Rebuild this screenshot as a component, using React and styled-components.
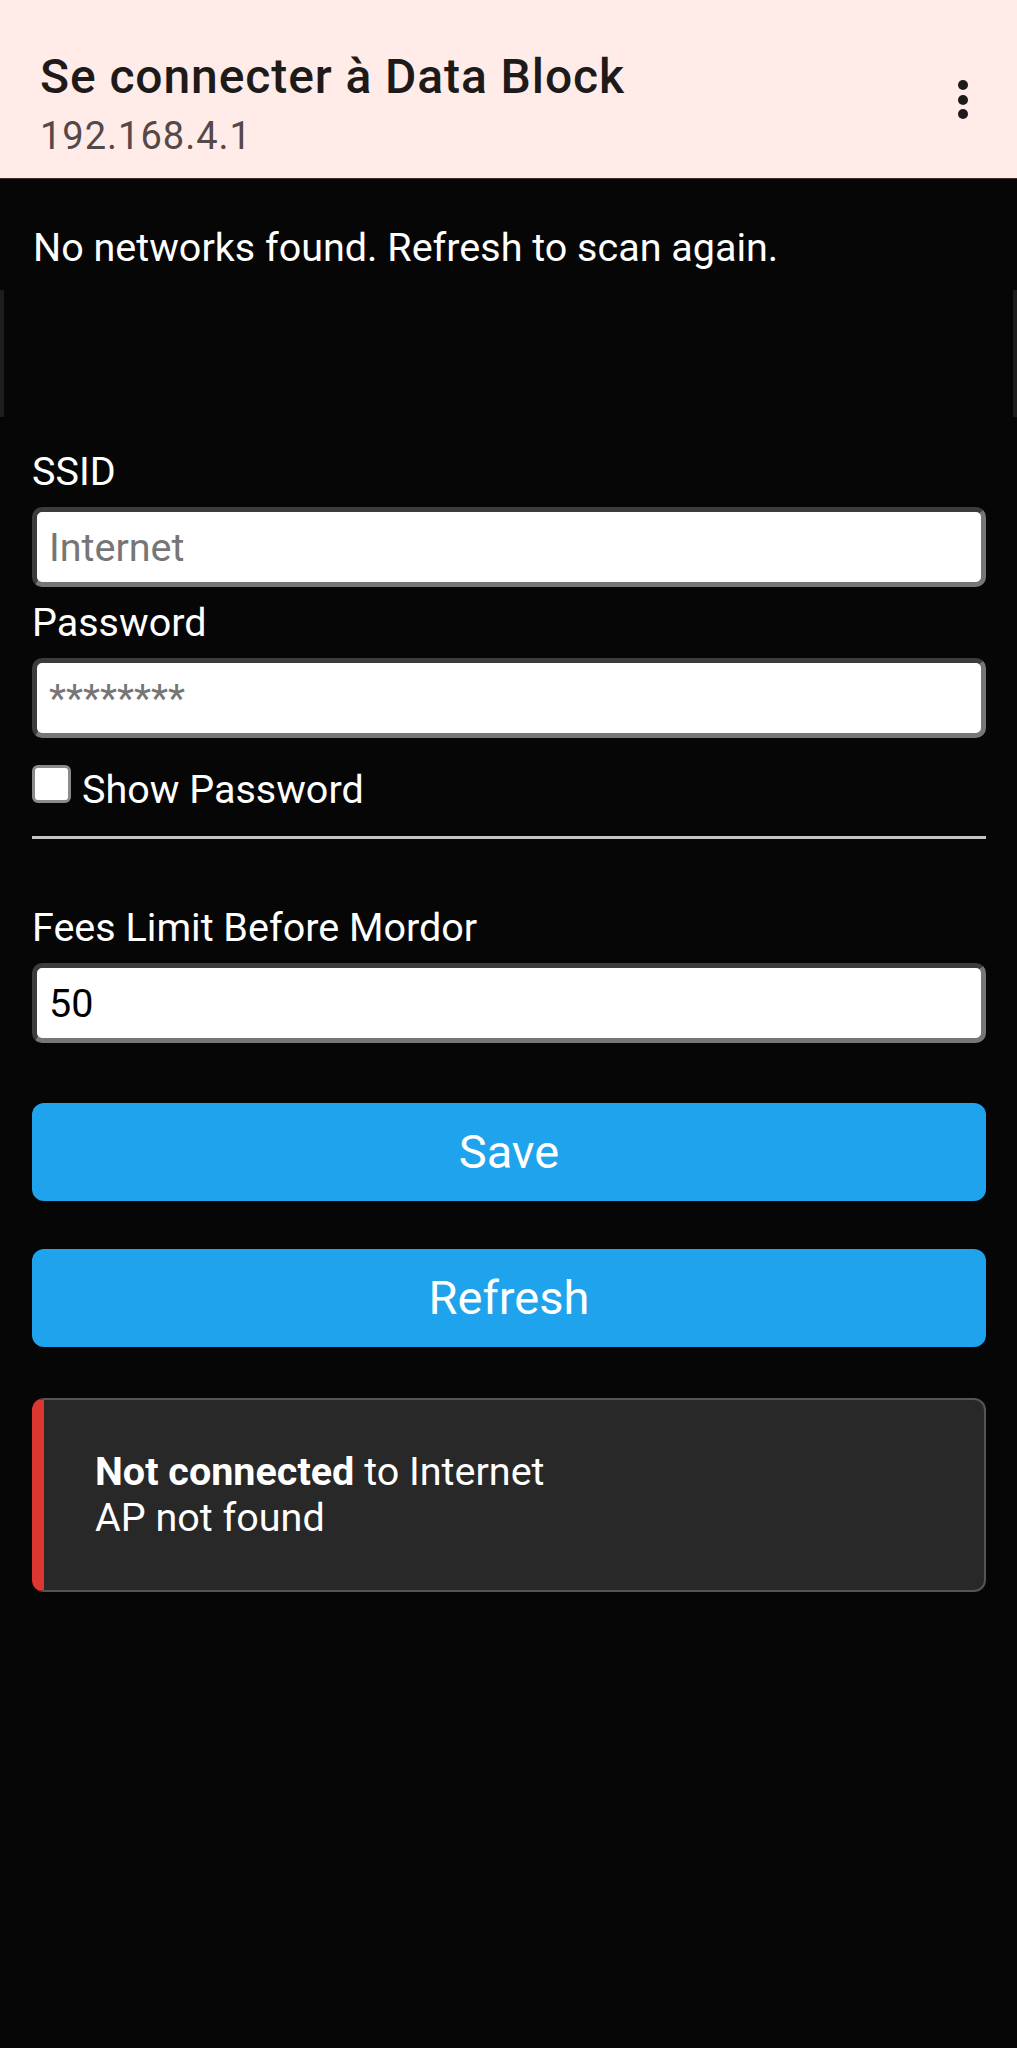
import React from 'react';
import styled, { createGlobalStyle } from 'styled-components';

const GlobalStyle = createGlobalStyle`
    html, body {
        margin: 0;
        padding: 0;
        background: #060606;
    }
    body {
        font-family: Roboto, "Liberation Sans", sans-serif;
        color: #fff;
    }
    * {
        box-sizing: border-box;
    }
`;

const Page = styled.div`
    min-height: 2048px;
    background: #060606;
`;

const Header = styled.header`
    height: 179px;
    background: #ffece8;
    padding: 49px 49px 0 40px;
    display: flex;
    justify-content: space-between;
    align-items: flex-start;
    border-bottom: 1px solid #3a3030;
`;

const TitleBlock = styled.div`
    display: flex;
    flex-direction: column;
    gap: 9px;
`;

const Title = styled.h1`
    margin: 0;
    font-size: 48px;
    line-height: 56px;
    font-weight: 500;
    letter-spacing: 0.9px;
    color: #1e1a1a;
`;

const SubTitle = styled.div`
    font-size: 38px;
    line-height: 44px;
    letter-spacing: 1px;
    color: #554848;
`;

const Kebab = styled.button`
    margin-top: 31px;
    padding: 0;
    border: 0;
    background: none;
    display: flex;
    flex-direction: column;
    gap: 4.5px;
    span {
        width: 10px;
        height: 10px;
        border-radius: 50%;
        background: #1e1a1a;
    }
`;

const Message = styled.p`
    margin: 45px 0 0;
    padding: 0 33px;
    font-size: 39.5px;
    line-height: 47px;
`;

const NetworkList = styled.div`
    margin-top: 19px;
    height: 127px;
    border-left: 4px solid #1d1d1d;
    border-right: 4px solid #1d1d1d;
`;

const Form = styled.form`
    padding: 31px 31px 0 32px;
    display: flex;
    flex-direction: column;
`;

const Label = styled.label`
    display: block;
    font-size: 39.5px;
    line-height: 47px;
    color: #fff;
`;

const Input = styled.input`
    display: block;
    width: 100%;
    height: 80px;
    margin: 12px 0;
    padding: 0 12px;
    font-family: Roboto, "Liberation Sans", sans-serif;
    font-size: 39.5px;
    color: #000;
    background: #fff;
    border: 5px solid;
    border-color: #3c3c3c #767676 #767676 #3c3c3c;
    border-radius: 10px;
    outline: none;
    &::placeholder {
        color: #767676;
    }
`;

const CheckRow = styled.div`
    display: flex;
    align-items: flex-start;
    gap: 11px;
    margin-top: 15px;
    font-size: 39.5px;
    line-height: 47px;
    span {
        padding-top: 1px;
    }
`;

const Check = styled.input`
    appearance: none;
    margin: 0;
    width: 39px;
    height: 38px;
    background: #fff;
    border: 3px solid #8a8a8a;
    border-radius: 6px;
`;

const Rule = styled.hr`
    margin: 23px 0 65px;
    height: 3px;
    border: 0;
    background: #c4c4c4;
`;

const Button = styled.button`
    display: block;
    width: 100%;
    margin-top: ${p => p.$top}px;
    border: 0;
    border-radius: 12px;
    background: #1fa3ec;
    color: #fff;
    font-family: Roboto, "Liberation Sans", sans-serif;
    font-size: 47px;
    line-height: 98px;
    padding: 0;
`;

const Status = styled.div`
    margin-top: 51px;
    padding: 49px 49px 49px 51px;
    background: #282828;
    border: 2px solid #555;
    border-left: 12px solid #dc3630;
    border-radius: 12px;
    font-size: 39.5px;
    line-height: 46px;
    color: #fff;
    b {
        font-weight: 700;
    }
`;

export default function App() {
    return (
        <Page>
            <GlobalStyle />
            <Header>
                <TitleBlock>
                    <Title>Se connecter à Data Block</Title>
                    <SubTitle>192.168.4.1</SubTitle>
                </TitleBlock>
                <Kebab aria-label="menu">
                    <span />
                    <span />
                    <span />
                </Kebab>
            </Header>
            <Message>No networks found. Refresh to scan again.</Message>
            <NetworkList />
            <Form onSubmit={e => e.preventDefault()}>
                <Label htmlFor="s">SSID</Label>
                <Input id="s" placeholder="Internet" />
                <Label htmlFor="p">Password</Label>
                <Input id="p" type="text" placeholder="********" />
                <CheckRow>
                    <Check type="checkbox" id="sp" />
                    <span>Show Password</span>
                </CheckRow>
                <Rule />
                <Label htmlFor="fees">Fees Limit Before Mordor</Label>
                <Input id="fees" defaultValue="50" />
                <Button type="submit" $top={48}>Save</Button>
                <Button type="button" $top={48}>Refresh</Button>
                <Status>
                    <b>Not connected</b> to Internet
                    <br />
                    AP not found
                </Status>
            </Form>
        </Page>
    );
}
